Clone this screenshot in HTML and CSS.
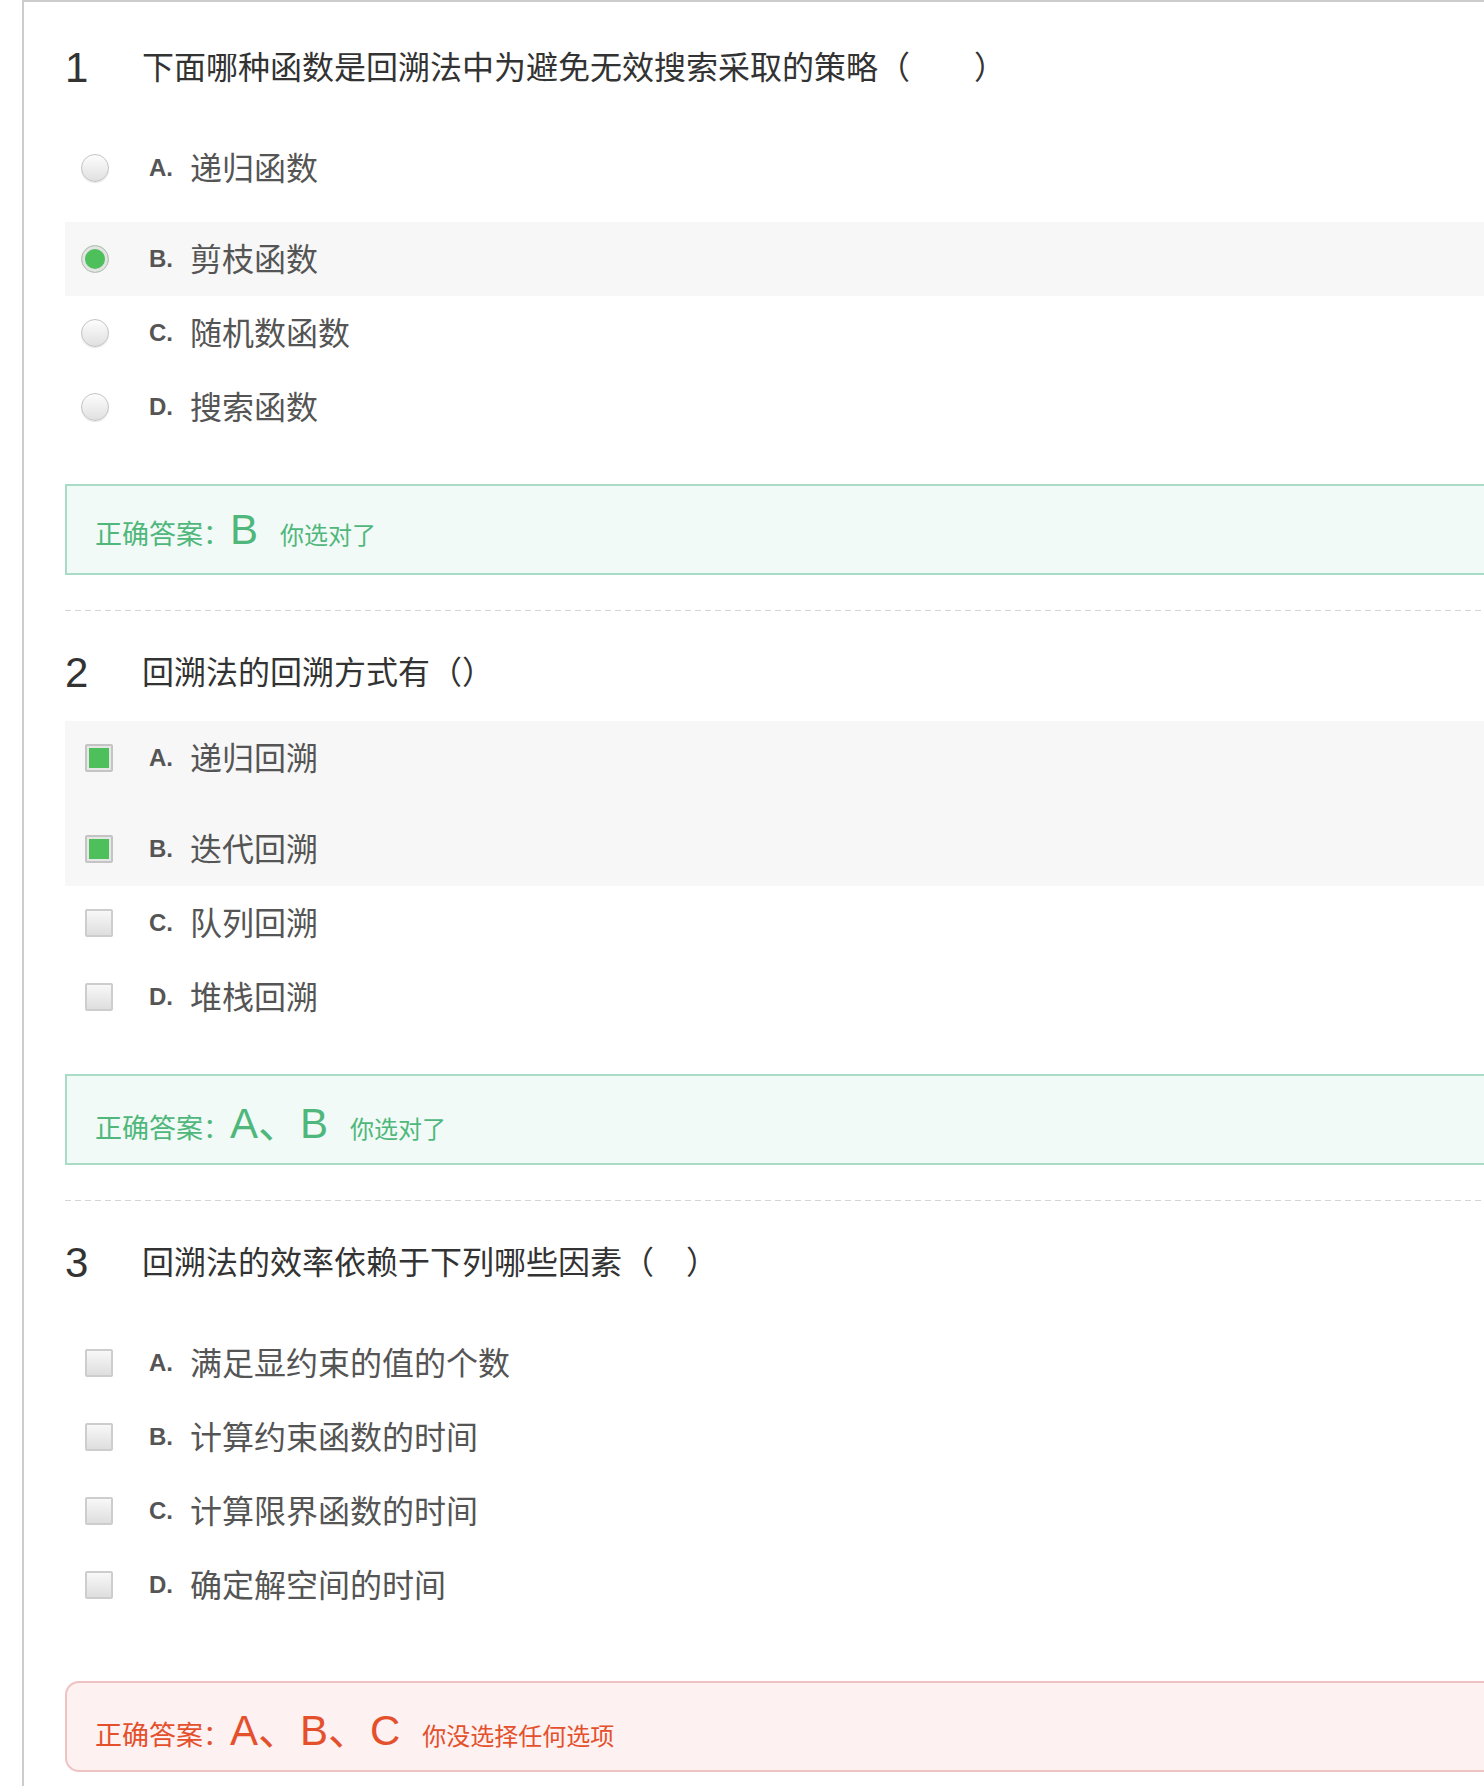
FILE: index.html
```html
<!DOCTYPE html>
<html lang="zh-CN">
<head>
    <meta charset="UTF-8">
    <meta name="viewport" content="width=device-width, initial-scale=1.0">
    <title>回溯法 练习</title>
    <link rel="stylesheet" href="styles.css">
</head>
<body>
    <div class="paper">
        <div class="question">
            <div class="q-title">
                <span class="q-num">1</span>
                <span class="q-text">下面哪种函数是回溯法中为避免无效搜索采取的策略（　　）</span>
            </div>
            <div class="options">
                <div class="opt first">
                    <span class="mark"><i class="radio"></i></span>
                    <span class="letter">A.</span>
                    <span class="opt-text">递归函数</span>
                </div>
                <div class="picked">
                    <div class="opt">
                        <span class="mark"><i class="radio on"></i></span>
                        <span class="letter">B.</span>
                        <span class="opt-text">剪枝函数</span>
                    </div>
                </div>
                <div class="opt">
                    <span class="mark"><i class="radio"></i></span>
                    <span class="letter">C.</span>
                    <span class="opt-text">随机数函数</span>
                </div>
                <div class="opt">
                    <span class="mark"><i class="radio"></i></span>
                    <span class="letter">D.</span>
                    <span class="opt-text">搜索函数</span>
                </div>
            </div>
            <div class="answer right">
                <div>
                    <span class="ans-label">正确答案：</span><span class="ans-key">B</span><span class="ans-note">你选对了</span>
                </div>
            </div>
        </div>

        <div class="sep"></div>

        <div class="question">
            <div class="q-title">
                <span class="q-num">2</span>
                <span class="q-text">回溯法的回溯方式有（）</span>
            </div>
            <div class="options near">
                <div class="picked">
                    <div class="opt first">
                        <span class="mark"><i class="check on"></i></span>
                        <span class="letter">A.</span>
                        <span class="opt-text">递归回溯</span>
                    </div>
                    <div class="opt">
                        <span class="mark"><i class="check on"></i></span>
                        <span class="letter">B.</span>
                        <span class="opt-text">迭代回溯</span>
                    </div>
                </div>
                <div class="opt">
                    <span class="mark"><i class="check"></i></span>
                    <span class="letter">C.</span>
                    <span class="opt-text">队列回溯</span>
                </div>
                <div class="opt">
                    <span class="mark"><i class="check"></i></span>
                    <span class="letter">D.</span>
                    <span class="opt-text">堆栈回溯</span>
                </div>
            </div>
            <div class="answer right">
                <div>
                    <span class="ans-label">正确答案：</span><span class="ans-key">A、B</span><span class="ans-note">你选对了</span>
                </div>
            </div>
        </div>

        <div class="sep"></div>

        <div class="question">
            <div class="q-title">
                <span class="q-num">3</span>
                <span class="q-text">回溯法的效率依赖于下列哪些因素（　）</span>
            </div>
            <div class="options">
                <div class="opt">
                    <span class="mark"><i class="check"></i></span>
                    <span class="letter">A.</span>
                    <span class="opt-text">满足显约束的值的个数</span>
                </div>
                <div class="opt">
                    <span class="mark"><i class="check"></i></span>
                    <span class="letter">B.</span>
                    <span class="opt-text">计算约束函数的时间</span>
                </div>
                <div class="opt">
                    <span class="mark"><i class="check"></i></span>
                    <span class="letter">C.</span>
                    <span class="opt-text">计算限界函数的时间</span>
                </div>
                <div class="opt">
                    <span class="mark"><i class="check"></i></span>
                    <span class="letter">D.</span>
                    <span class="opt-text">确定解空间的时间</span>
                </div>
            </div>
            <div class="answer wrong late">
                <div>
                    <span class="ans-label">正确答案：</span><span class="ans-key">A、B、C</span><span class="ans-note">你没选择任何选项</span>
                </div>
            </div>
        </div>
    </div>
</body>
</html>
```

FILE: styles.css
```css
body {
    margin: 0;
    overflow: hidden;
    background: #fff;
    font-family: "Liberation Sans", "Noto Sans CJK SC", sans-serif;
}
.paper {
    margin-left: 22px;
    border-top: 2px solid #ccc;
    border-left: 2px solid #ccc;
    padding: 42px 0 40px 41px;
}
.q-title {
    display: flex;
    align-items: center;
    height: 48px;
}
.q-num {
    width: 77px;
    font-size: 42px;
    line-height: 48px;
    color: #333;
}
.q-text {
    font-size: 32px;
    line-height: 48px;
    color: #333;
}
.options {
    margin-top: 39px;
}
.options.near {
    margin-top: 24px;
}
.opt {
    display: flex;
    align-items: center;
    height: 74px;
}
.opt.first {
    margin-bottom: 17px;
}
.picked {
    background: #f7f7f7;
}
.mark {
    width: 84px;
    display: flex;
    align-items: center;
}
.radio, .check {
    display: block;
    width: 28px;
    height: 28px;
    box-sizing: border-box;
}
.radio {
    margin-left: 16px;
    border-radius: 50%;
    border: 1px solid #c4c4c4;
    background: linear-gradient(#fdfdfd, #e0e0e0);
    box-shadow: 0 1px 1px rgba(0, 0, 0, 0.1);
}
.radio.on {
    background: #4dbf5b;
    box-shadow: inset 0 0 0 3px #e4e4e4;
}
.check {
    margin-left: 20px;
    border: 2px solid #cdcdcd;
    border-radius: 2px;
    background: linear-gradient(#f8f8f8, #dedede);
}
.check.on {
    border-color: #c4c4c4;
    background: #4dbf5b;
    box-shadow: inset 0 0 0 2px #e6e6e6;
}
.letter {
    width: 41px;
    font-size: 24px;
    font-weight: bold;
    color: #555;
}
.opt-text {
    margin-top: -4px;
    font-size: 32px;
    color: #555;
}
.answer {
    display: flex;
    align-items: center;
    box-sizing: border-box;
    height: 91px;
    margin-top: 40px;
    margin-right: -20px;
    padding: 0 0 0 28px;
    border: 2px solid;
}
.answer.late {
    margin-top: 59px;
}
.answer.right {
    border-color: #a9dcc6;
    background: #f1faf6;
    color: #4fb77b;
}
.answer.wrong {
    border-color: #efc3c3;
    background: #fdf1f1;
    color: #e4502c;
    border-radius: 14px;
}
.ans-label {
    font-size: 27px;
}
.ans-key {
    font-size: 42px;
}
.ans-note {
    margin-left: 22px;
    font-size: 24px;
}
.sep {
    height: 1px;
    margin: 35px 0 38px;
    background: repeating-linear-gradient(to right, #d4d4d4 0 6px, transparent 6px 10px);
}
```
